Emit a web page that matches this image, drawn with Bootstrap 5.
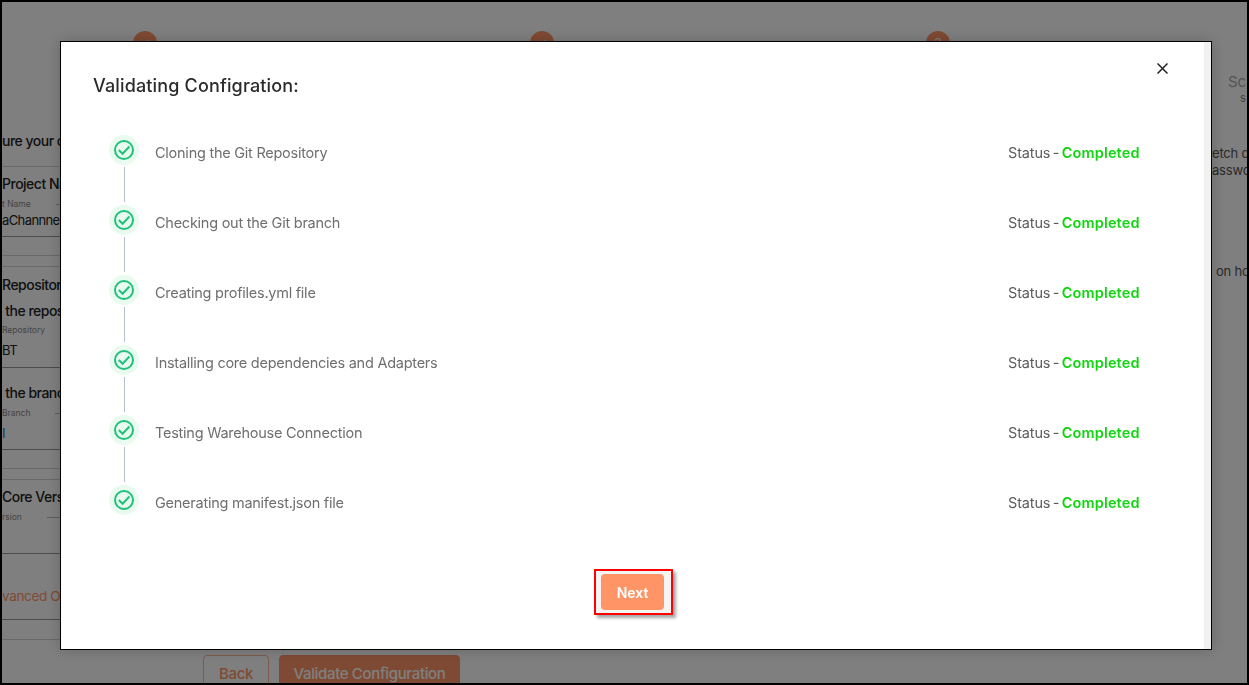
<!DOCTYPE html>
<html>
<head>
  <title>Validating Configuration</title>
  <meta name="viewport" content="width=device-width, initial-scale=1.0">
  <link href="https://cdn.jsdelivr.net/npm/bootstrap@5.3.0/dist/css/bootstrap.min.css" rel="stylesheet">
  <style>
    html, body { height: 100%; }
    body {
      font-family: Inter, "Liberation Sans", sans-serif;
      border: 2px solid #000;
      background: #fff;
      overflow: hidden;
    }

    /* page behind the dialog */
    .page-shell { height: 100%; overflow: hidden; }
    .step-row { padding: 29px 0 0 131px; gap: 372.5px; height: 60px; flex: 0 0 60px; }
    .step-dot {
      width: 24px; height: 24px; border-radius: 50%; flex-shrink: 0;
      background: #ff9566; color: #fff; font-size: 12px;
    }
    .step-rule { width: 37px; height: 1px; margin-top: 13px; background: #e6e6e6; flex-shrink: 0; }
    .page-main { flex: 0 0 593px; }
    .side-left { width: 200px; color: #222; white-space: nowrap; }
    .side-right { width: 35px; color: #555; white-space: nowrap; overflow: hidden; }
    .form-line { border-top: 1px solid #d4d4d4; }
    .line-dark { border-top-color: #999; }
    .form-head { font-size: 14px; font-weight: 500; line-height: 20px; letter-spacing: -.5px; }
    .form-hint { font-size: 8.5px; color: #888; line-height: 12px; gap: 25px; }
    .hint-rule { width: 60px; border-top: 1px solid #bbb; }
    .form-value { font-size: 13px; line-height: 20px; letter-spacing: -.6px; }
    .adv-link { color: #ff9566; font-size: 13.5px; line-height: 20px; letter-spacing: -.35px; }
    .side-title { font-size: 15px; line-height: 18px; color: #aaa; margin: 11px 0 0 16px; }
    .side-sub { font-size: 11px; line-height: 14px; color: #888; margin-left: 28px; }
    .side-text { font-size: 13px; line-height: 17px; letter-spacing: -.2px; margin-top: 40px; }
    .side-text-low { margin: 84px 0 0 4px; }
    .gap-3px { margin-top: 3px; }
    .gap-4px { margin-top: 4px; }
    .gap-6px { margin-top: 6px; }
    .gap-7px { margin-top: 7px; }
    .gap-8px { margin-top: 8px; }
    .gap-10px { margin-top: 10px; }
    .gap-13px { margin-top: 13px; }
    .gap-15px { margin-top: 15px; }
    .gap-18px { margin-top: 18px; }
    .gap-19px { margin-top: 19px; }
    .gap-30px { margin-top: 30px; }
    .gap-32px { margin-top: 32px; }
    .gap-69px { margin-top: 69px; }
    .foot-row { padding-left: 201px; gap: 10px; flex-shrink: 0; }
    .foot-back, .foot-validate {
      height: 38px; font-size: 15px; border-radius: 4px;
      padding: 0; font-weight: 500; white-space: nowrap; letter-spacing: -.35px;
    }
    .foot-back { color: #ff9566; border: 1px solid #ffb899; background: #fff; width: 66px; }
    .foot-validate { color: #fff; background: #ff9566; border: 1px solid #ff9566; width: 181px; }

    /* dialog */
    .validate-dialog.modal-dialog { max-width: 1152px; width: 1152px; margin: 41px 0 0 60px; }
    .validate-box {
      height: 609px; border: 1px solid #000; border-radius: 0;
      box-shadow: 0 0 14px rgba(0,0,0,.2);
    }
    .validate-body { padding: 30px 32px 0 32px; position: relative; }
    .scroll-strip { width: 7px; background: #f1f1f1; }
    .validate-title { font-size: 18px; font-weight: 500; line-height: 28px; color: #2b2b2b; letter-spacing: .15px; }
    .close-x {
      position: absolute; top: 21px; right: 36px;
      width: 11px; height: 11px; padding: 0; border: 0; background: none; line-height: 0;
    }
    .close-x svg { width: 11px; height: 11px; display: block; }
    .step-list { margin: 35px 0 0 16px; padding: 0; list-style: none; }
    .step-item { height: 70px; }
    .step-rail { width: 30px; }
    .step-halo { width: 30px; height: 30px; display: block; }
    .step-link { width: 1px; height: 35px; background: #b3c2d1; margin-top: 2px; }
    .step-name {
      margin: 6px 0 0 16px; line-height: 24px; font-size: 14.5px;
      color: #6f6f6f; width: 853px; letter-spacing: -.25px;
    }
    .step-status {
      margin-top: 6px; line-height: 24px; font-size: 14.5px;
      color: #5c5c5c; white-space: nowrap; letter-spacing: -.15px; word-spacing: -1.5px;
    }
    .status-ok { color: #0fd60f; font-weight: 600; letter-spacing: .15px; }
    .next-mark {
      margin: 14px 0 0 2px;
      padding: 3px 7px 3px 5px; border: 2px solid #f00; background: #f4f4f4;
      box-shadow: 3px 3px 3px rgba(0,0,0,.35);
    }
    .next-btn {
      width: 63px; height: 36px; padding: 0; border: 0; border-radius: 4px;
      background: #ff9566; color: #fff; font-size: 14px; font-weight: 600;
      display: block;
    }
  </style>
</head>
<body>
  <div class="page-shell d-flex flex-column">
    <div class="step-row d-flex">
      <div class="step-dot d-flex align-items-center justify-content-center">&#10003;</div>
      <div class="step-dot d-flex align-items-center justify-content-center">&#10003;</div>
      <div class="step-dot d-flex align-items-center justify-content-center">3</div>
      <div class="step-rule ms-auto"></div>
    </div>
    <div class="page-main d-flex justify-content-between">
      <div class="side-left">
        <div class="form-head gap-69px">ure your configuration</div>
        <div class="form-line gap-15px"></div>
        <div class="form-head gap-7px">Project Name</div>
        <div class="form-hint d-flex align-items-center gap-4px">t Name<span class="hint-rule"></span></div>
        <div class="form-value">aChannnel</div>
        <div class="form-line line-dark gap-6px"></div>
        <div class="form-line gap-18px"></div>
        <div class="form-line gap-10px"></div>
        <div class="form-head gap-8px">Repository</div>
        <div class="form-head gap-6px">&nbsp;the repository</div>
        <div class="form-hint gap-3px">Repository</div>
        <div class="form-value gap-4px">BT</div>
        <div class="form-line line-dark gap-7px"></div>
        <div class="form-head gap-15px">&nbsp;the branch</div>
        <div class="form-hint d-flex align-items-center gap-4px">Branch<span class="hint-rule"></span></div>
        <div class="form-value text-primary gap-4px">I</div>
        <div class="form-line line-dark gap-6px"></div>
        <div class="form-line gap-18px"></div>
        <div class="form-line gap-10px"></div>
        <div class="form-head gap-7px">Core Version</div>
        <div class="form-hint d-flex align-items-center gap-4px">rsion<span class="hint-rule"></span></div>
        <div class="form-line line-dark gap-30px"></div>
        <div class="adv-link gap-32px">vanced Options</div>
        <div class="form-line line-dark gap-13px"></div>
        <div class="form-line gap-19px"></div>
      </div>
      <div class="side-right">
        <div class="side-title">Sc</div>
        <div class="side-sub">s</div>
        <div class="side-text">etch d<br>asswo</div>
        <div class="side-text side-text-low">on ho</div>
      </div>
    </div>
    <div class="foot-row d-flex">
      <button class="foot-back" type="button">Back</button>
      <button class="foot-validate" type="button">Validate Configuration</button>
    </div>
  </div>

  <div class="modal-backdrop show"></div>

  <div class="modal d-block" tabindex="-1">
    <div class="modal-dialog validate-dialog">
      <div class="modal-content validate-box flex-row">
        <div class="validate-body flex-grow-1">
          <button class="close-x" type="button" aria-label="Close">
            <svg viewBox="0 0 11 11"><path d="M.5.5l10 10M10.5.5l-10 10" fill="none" stroke="#222" stroke-width="1.5"/></svg>
          </button>
          <div class="validate-title">Validating Configration:</div>
          <ul class="step-list" id="stepList"></ul>
          <div class="d-flex justify-content-center">
            <div class="next-mark">
              <button class="next-btn" type="button">Next</button>
            </div>
          </div>
        </div>
        <div class="scroll-strip flex-shrink-0"></div>
      </div>
    </div>
  </div>

  <script src="https://cdn.jsdelivr.net/npm/bootstrap@5.3.0/dist/js/bootstrap.bundle.min.js"></script>
  <script>
    const steps = [
      'Cloning the Git Repository',
      'Checking out the Git branch',
      'Creating profiles.yml file',
      'Installing core dependencies and Adapters',
      'Testing Warehouse Connection',
      'Generating manifest.json file'
    ];

    const list = document.getElementById('stepList');
    steps.forEach((name, i) => {
      const link = i < steps.length - 1 ? '<div class="step-link"></div>' : '';
      list.innerHTML += `
        <li class="step-item d-flex align-items-start">
          <div class="step-rail d-flex flex-column align-items-center">
            <svg class="step-halo" viewBox="0 0 30 30">
              <circle cx="15" cy="15" r="15" fill="#e8fbee"/>
              <circle cx="15" cy="15" r="9" fill="none" stroke="#22c07d" stroke-width="2"/>
              <path d="M9.8 15l3.8 3.8 6.8-7.3" fill="none" stroke="#22c07d" stroke-width="2"/>
            </svg>
            ${link}
          </div>
          <div class="step-name">${name}</div>
          <div class="step-status">Status - <span class="status-ok">Completed</span></div>
        </li>`;
    });
  </script>
</body>
</html>
